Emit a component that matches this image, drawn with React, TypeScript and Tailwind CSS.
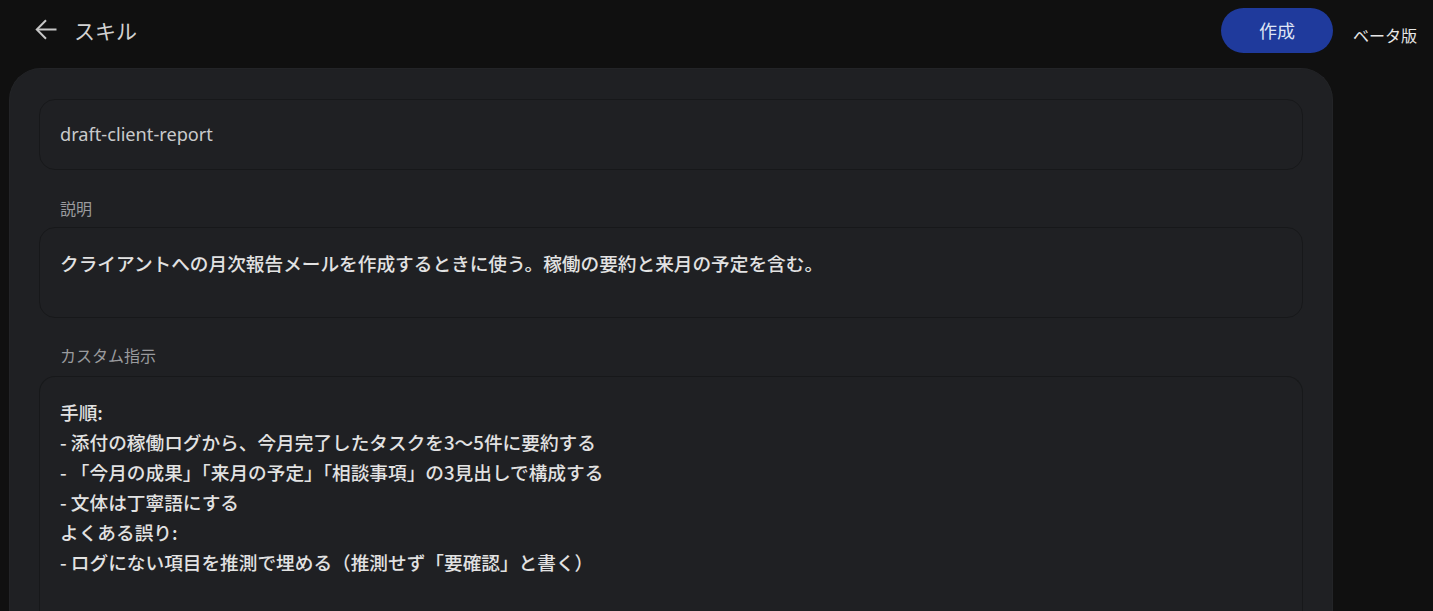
const jp = "font-['Noto_Sans_CJK_JP','Noto_Sans',sans-serif]"

const instructions = [
  '手順:',
  '- 添付の稼働ログから、今月完了したタスクを3〜5件に要約する',
  '- 「今月の成果」「来月の予定」「相談事項」の3見出しで構成する',
  '- 文体は丁寧語にする',
  'よくある誤り:',
  '- ログにない項目を推測で埋める（推測せず「要確認」と書く）',
]

const BackArrow = () => (
  <svg width="22" height="21" viewBox="0 0 22 21" fill="none" stroke="#c7c7c7" strokeWidth="2">
    <path d="M11 1.2 L1.8 10.5 L11 19.8" strokeLinejoin="miter" />
    <path d="M2 10.5 H21.5" />
  </svg>
)

const FieldLabel = ({ children }: { children: string }) => (
  <p className={`pl-[21px] text-[16px] leading-5 text-[#9a9b9e] ${jp}`}>{children}</p>
)

export default function App() {
  return (
    <div className={`flex h-[611px] w-full overflow-hidden bg-[#101010] ${jp}`}>
      <div className="ml-[9px] flex w-[1324px] shrink-0 flex-col">
        <header className="flex h-[68px] shrink-0 items-start justify-between">
          <div className="mt-[19px] flex items-center gap-[17px] pl-[26px]">
            <BackArrow />
            <h1 className="text-[21px] leading-5 text-[#d2d2d2]">スキル</h1>
          </div>
          <button className="mt-2 h-[45px] w-[112px] rounded-full bg-[#1f3a9c] text-[18px] text-[#dfe5f5]">
            作成
          </button>
        </header>

        <main className="flex-1 rounded-t-[32px] border border-b-0 border-[#232427] bg-[#1f2023] px-[29px] pt-[30px]">
          <div className="flex h-[71px] items-center rounded-2xl border border-[#17181a] px-5">
            <span className="font-['Noto_Sans','Roboto',sans-serif] text-[18.2px] text-[#c9cacc]">
              draft-client-report
            </span>
          </div>

          <div className="mt-[28px]">
            <FieldLabel>説明</FieldLabel>
          </div>
          <div className="mt-[9px] h-[91px] rounded-2xl border border-[#17181a] px-5 pt-[23px]">
            <p className="text-[18.67px] font-medium leading-6 text-[#e2e2e2]">
              クライアントへの月次報告メールを作成するときに使う。稼働の要約と来月の予定を含む。
            </p>
          </div>

          <div className="mt-[27px]">
            <FieldLabel>カスタム指示</FieldLabel>
          </div>
          <div className="mt-[11px] h-[300px] rounded-t-2xl border border-b-0 border-[#17181a] px-5 pt-[20px]">
            {instructions.map((line) => (
              <p key={line} className="text-[18.67px] font-medium leading-[30px] text-[#e2e2e2]">
                {line}
              </p>
            ))}
          </div>
        </main>
      </div>

      <div className="pl-[20px] pt-[23px]">
        <span className="whitespace-nowrap text-[16px] leading-5 text-[#e6e6e6]">ベータ版</span>
      </div>
    </div>
  )
}
